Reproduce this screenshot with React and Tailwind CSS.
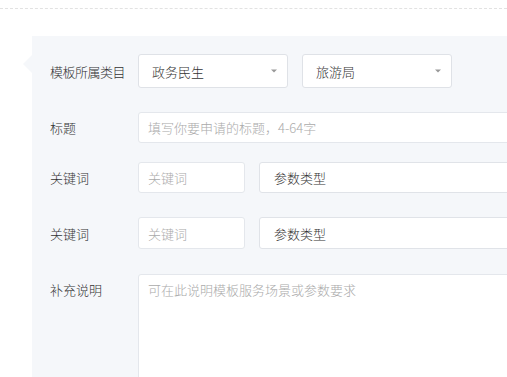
export default function App() {
  const caret = (
    <span className="absolute right-[10px] top-1/2 -translate-y-1/2 w-0 h-0 border-l-[3px] border-r-[3px] border-t-[3px] border-l-transparent border-r-transparent border-t-[#999]" />
  );
  return (
    <div className="w-[507px] h-[377px] overflow-hidden bg-white font-['Noto_Sans_CJK_SC',sans-serif] font-light text-[13px] leading-[19px] text-[#333]">
      <div className="pt-[8px]">
        <div className="border-t border-dashed border-[#e2e2e2]" />
      </div>
      <div className="relative ml-[32px] mt-[27px] bg-[#f5f7fa] w-[600px] h-[400px] pl-[18px] pt-[18px]">
        <span className="absolute left-[-9px] top-[19px] w-0 h-0 border-t-[9px] border-b-[9px] border-r-[9px] border-t-transparent border-b-transparent border-r-[#f5f7fa]" />
        {/* row 1 */}
        <div className="flex items-center h-[34px]">
          <div className="w-[88px] shrink-0 tracking-[-0.5px]">模板所属类目</div>
          <div className="relative w-[150px] h-full bg-white border border-[#dfe2e7] rounded-[3px] flex items-center pl-[13px]">
            政务民生{caret}
          </div>
          <div className="relative ml-[14px] w-[150px] h-full bg-white border border-[#dfe2e7] rounded-[3px] flex items-center pl-[13px]">
            旅游局{caret}
          </div>
        </div>
        {/* row 2 */}
        <div className="flex items-center h-[31px] mt-[24px]">
          <div className="w-[88px] shrink-0">标题</div>
          <div className="w-[420px] h-full bg-white border border-[#e4e7ec] rounded-[3px] flex items-center pl-[9px] text-[#aaa]">
            填写你要申请的标题，4-64字
          </div>
        </div>
        {/* row 3 */}
        <div className="flex items-center h-[31px] mt-[19px]">
          <div className="w-[88px] shrink-0">关键词</div>
          <div className="w-[107px] h-full bg-white border border-[#e4e7ec] rounded-[3px] flex items-center pl-[9px] text-[#aaa]">
            关键词
          </div>
          <div className="ml-[14px] w-[300px] h-full bg-white border border-[#e0e3e8] rounded-[3px] flex items-center pl-[14px]">
            参数类型
          </div>
        </div>
        {/* row 4 */}
        <div className="flex items-center h-[32px] mt-[24px]">
          <div className="w-[88px] shrink-0">关键词</div>
          <div className="w-[107px] h-full bg-white border border-[#e4e7ec] rounded-[3px] flex items-center pl-[9px] text-[#aaa]">
            关键词
          </div>
          <div className="ml-[14px] w-[300px] h-full bg-white border border-[#e0e3e8] rounded-[3px] flex items-center pl-[14px]">
            参数类型
          </div>
        </div>
        {/* row 5 */}
        <div className="flex items-start mt-[25px]">
          <div className="w-[88px] shrink-0 mt-[6px]">补充说明</div>
          <div className="w-[420px] h-[150px] bg-white border border-[#e4e7ec] rounded-[3px] pl-[9px] pt-[5px] text-[#aaa]">
            可在此说明模板服务场景或参数要求
          </div>
        </div>
      </div>
    </div>
  );
}
